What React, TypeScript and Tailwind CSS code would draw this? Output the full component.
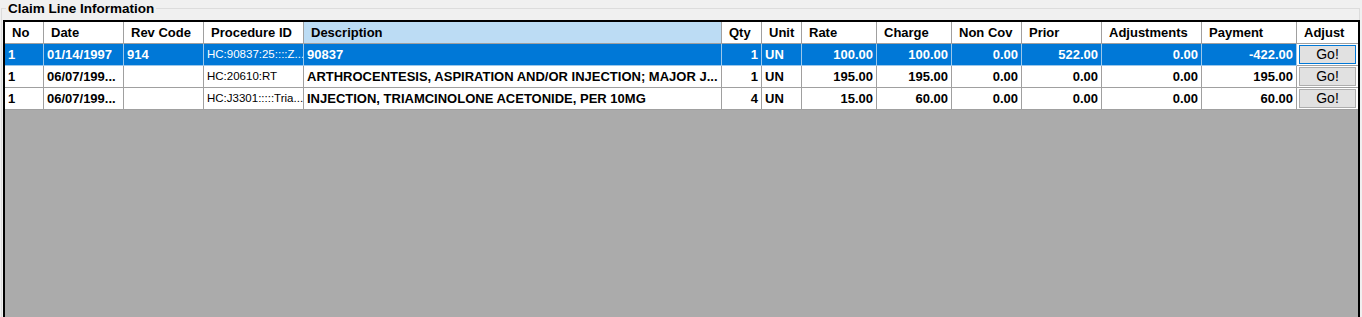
import React from "react";

const cols = [
  { key: "no", label: "No", w: 39, align: "left" },
  { key: "date", label: "Date", w: 80, align: "left" },
  { key: "rev", label: "Rev Code", w: 80, align: "left" },
  { key: "proc", label: "Procedure ID", w: 100, align: "left" },
  { key: "desc", label: "Description", w: 418, align: "left" },
  { key: "qty", label: "Qty", w: 40, align: "right" },
  { key: "unit", label: "Unit", w: 40, align: "left" },
  { key: "rate", label: "Rate", w: 75, align: "right" },
  { key: "charge", label: "Charge", w: 75, align: "right" },
  { key: "noncov", label: "Non Cov", w: 70, align: "right" },
  { key: "prior", label: "Prior", w: 80, align: "right" },
  { key: "adj", label: "Adjustments", w: 100, align: "right" },
  { key: "pay", label: "Payment", w: 95, align: "right" },
  { key: "go", label: "Adjust", w: 61, align: "center" },
];

type Row = Record<string, string>;

const rows: Row[] = [
  {
    no: "1",
    date: "01/14/1997",
    rev: "914",
    proc: "HC:90837:25::::Z...",
    desc: "90837",
    qty: "1",
    unit: "UN",
    rate: "100.00",
    charge: "100.00",
    noncov: "0.00",
    prior: "522.00",
    adj: "0.00",
    pay: "-422.00",
  },
  {
    no: "1",
    date: "06/07/199...",
    rev: "",
    proc: "HC:20610:RT",
    desc: "ARTHROCENTESIS, ASPIRATION AND/OR INJECTION; MAJOR J...",
    qty: "1",
    unit: "UN",
    rate: "195.00",
    charge: "195.00",
    noncov: "0.00",
    prior: "0.00",
    adj: "0.00",
    pay: "195.00",
  },
  {
    no: "1",
    date: "06/07/199...",
    rev: "",
    proc: "HC:J3301:::::Tria...",
    desc: "INJECTION, TRIAMCINOLONE ACETONIDE, PER 10MG",
    qty: "4",
    unit: "UN",
    rate: "15.00",
    charge: "60.00",
    noncov: "0.00",
    prior: "0.00",
    adj: "0.00",
    pay: "60.00",
  },
];

const gridTemplate = "grid-cols-[39px_80px_80px_100px_418px_40px_40px_75px_75px_70px_80px_100px_95px_61px]";

export default function App() {
  return (
    <div
      className="w-[1362px] h-[317px] bg-[#f0f0f0] overflow-hidden text-black"
      style={{ fontFamily: '"Liberation Sans", Arial, sans-serif' }}
    >
      <div className="relative pt-[8px] pl-[1px] pr-[2px] h-full">
        <div className="border-t border-r border-l border-[#dcdcdc] h-full pt-[11px] pl-[1px]">
          <div className="w-[1357px] h-[400px] border-2 border-black bg-[#ababab]">
            <div className={`grid ${gridTemplate} bg-white`}>
              {cols.map((c) => (
                <div
                  key={c.key}
                  className={`h-[22px] border-r border-b border-[#a0a0a0] pl-[7px] flex items-center text-[13px] font-bold whitespace-nowrap overflow-hidden ${
                    c.key === "desc" ? "bg-[#bcdcf4]" : "bg-white"
                  } ${c.key === "go" ? "border-r-0" : ""}`}
                >
                  {c.label}
                </div>
              ))}
            </div>
            {rows.map((r, i) => {
              const sel = i === 0;
              return (
                <div
                  key={i}
                  className={`grid ${gridTemplate} ${sel ? "bg-[#0078d7] text-white" : "bg-white text-black"}`}
                >
                  {cols.map((c) => {
                    if (c.key === "go") {
                      return (
                        <div
                          key={c.key}
                          className="h-[22px] border-b border-[#a0a0a0] flex items-center justify-center px-[2px] bg-white"
                        >
                          <div
                            className={`w-full h-[19px] flex items-center justify-center bg-[#e1e1e1] border text-[14px] text-black ${
                              sel ? "border-[#0078d7]" : "border-[#adadad]"
                            }`}
                          >
                            Go!
                          </div>
                        </div>
                      );
                    }
                    const isProc = c.key === "proc";
                    return (
                      <div
                        key={c.key}
                        className={`h-[22px] border-r border-b flex items-center whitespace-nowrap overflow-hidden px-[3px] ${
                          sel ? "border-[#9cc7ea]" : "border-[#a0a0a0]"
                        } ${c.align === "right" ? "justify-end" : "justify-start"} ${
                          isProc ? "text-[11.5px] font-normal" : "text-[13px] font-bold"
                        }`}
                      >
                        {r[c.key]}
                      </div>
                    );
                  })}
                </div>
              );
            })}
          </div>
        </div>
        <div className="absolute left-[6px] top-[1px] px-[2px] bg-[#f0f0f0] text-[13.5px] leading-[16px] font-bold">
          Claim Line Information
        </div>
      </div>
    </div>
  );
}
